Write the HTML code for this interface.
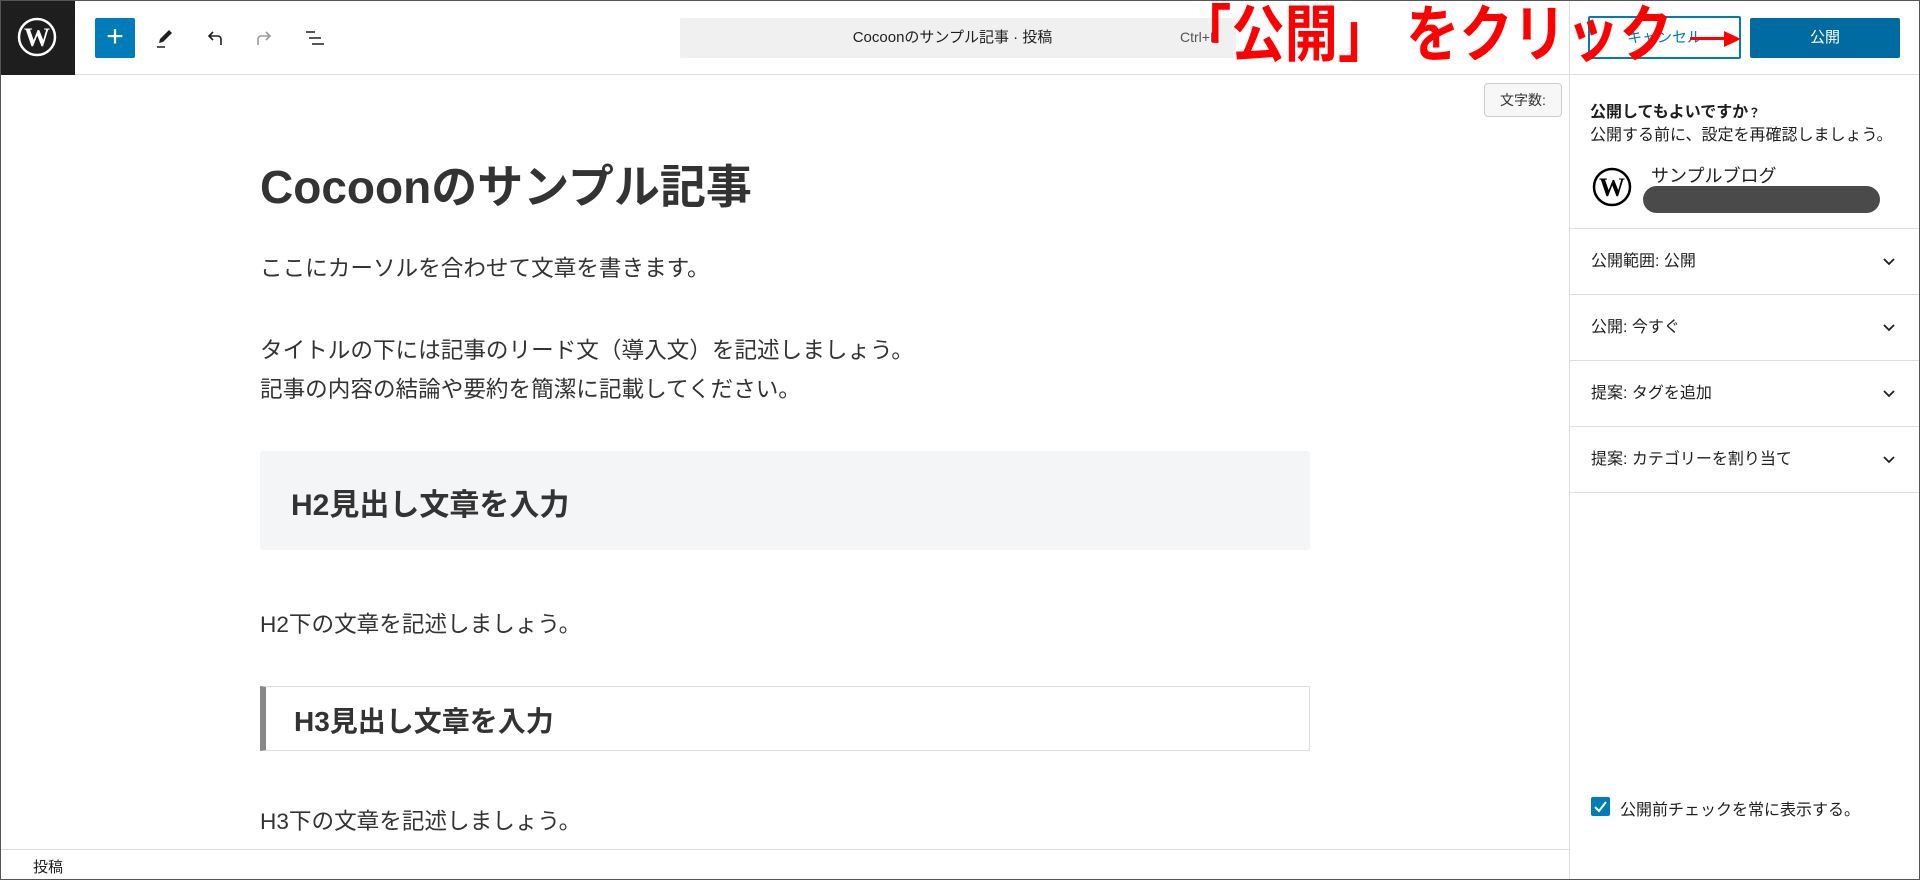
<!DOCTYPE html>
<html><head><meta charset="utf-8"><style>
*{margin:0;padding:0;box-sizing:border-box}
body{width:1920px;height:880px;position:relative;overflow:hidden;background:#fff;font-family:"Liberation Sans","Noto Sans CJK JP",sans-serif;color:#1e1e1e}
.a{position:absolute;white-space:nowrap}
.frame{position:absolute;left:0;top:0;width:1920px;height:880px;border:1px solid #555;pointer-events:none}
.row{position:absolute;left:1570px;width:350px;height:66px;border-bottom:1px solid #ddd;font-size:16px;padding-left:21px;line-height:66px}
.row svg{position:absolute;right:24px;top:26px}
.p{font-size:22.6px;color:#333;position:absolute;left:260px;white-space:nowrap}
</style></head><body>
<div class="a" style="left:0;top:0;width:1920px;height:75px;border-bottom:1px solid #ddd"></div>
<div class="a" style="left:0;top:0;width:75px;height:75px;background:#1e1e1e"></div>
<svg class="a" style="left:17px;top:17px" width="40" height="40" viewBox="0 0 40 40"><circle cx="20" cy="20" r="18" fill="none" stroke="#fff" stroke-width="2.5"/><text x="20" y="29" font-family="Liberation Serif,serif" font-size="26" font-weight="bold" fill="#fff" text-anchor="middle">W</text></svg>
<div class="a" style="left:95px;top:18px;width:40px;height:40px;background:#007cba;border-radius:2px;color:#fff;font-size:30px;line-height:38px;text-align:center">+</div>
<svg class="a" style="left:153px;top:26px" width="24" height="24" viewBox="0 0 24 24"><path d="M16 4l3 3-9 9-4 1 1-4z" fill="#1e1e1e"/><path d="M4 21h8" stroke="#1e1e1e" stroke-width="1.5"/></svg>
<svg class="a" style="left:203px;top:26px" width="24" height="24" viewBox="0 0 24 24"><path d="M18 19v-6a3 3 0 0 0-3-3H6M10 6l-4 4 4 4" fill="none" stroke="#1e1e1e" stroke-width="1.6"/></svg>
<svg class="a" style="left:252px;top:26px" width="24" height="24" viewBox="0 0 24 24"><path d="M6 19v-6a3 3 0 0 1 3-3h9M14 6l4 4-4 4" fill="none" stroke="#999" stroke-width="1.6"/></svg>
<svg class="a" style="left:303px;top:26px" width="24" height="24" viewBox="0 0 24 24"><path d="M3 6h9M6 12h12M9 18h12" stroke="#1e1e1e" stroke-width="1.6"/></svg>
<div class="a" style="left:680px;top:18px;width:556px;height:40px;background:#f0f0f0;border-radius:2px"></div>
<div class="a" style="left:680px;top:18px;width:545px;height:40px;line-height:40px;text-align:center;font-size:15px;color:#1e1e1e">Cocoonのサンプル記事 · 投稿</div>
<div class="a" style="left:1180px;top:29px;font-size:14px;color:#555">Ctrl+K</div>
<div class="a" style="left:1569px;top:0;width:1px;height:880px;background:#ddd"></div>
<div class="a" style="left:1588px;top:16px;width:153px;height:43px;border:2px solid #007cba;border-radius:2px;color:#007cba;font-size:15px;text-align:center;line-height:39px">キャンセル</div>
<div class="a" style="left:1750px;top:18px;width:150px;height:40px;background:#006ba1;border-radius:2px;color:#fff;font-size:15px;text-align:center;line-height:40px">公開</div>
<div class="a" style="left:1178px;top:0px;font-size:62px;font-weight:bold;color:#f00;line-height:72px;transform:scaleX(0.86);transform-origin:0 0">「公開」 をクリック</div>
<div class="a" style="left:1690px;top:37px;width:44px;height:3px;background:#f00"></div>
<svg class="a" style="left:1724px;top:30px" width="18" height="18" viewBox="0 0 18 18"><path d="M0 1l17 8-17 8z" fill="#f00"/></svg>
<div class="a" style="left:1484px;top:83px;width:78px;height:34px;border:1px solid #ccc;border-radius:4px;background:#f7f7f7;font-size:14px;text-align:center;line-height:32px;color:#333">文字数:</div>
<div class="a" style="left:260px;top:151px;font-size:46px;font-weight:bold;color:#333">Cocoonのサンプル記事</div>
<div class="p" style="top:250px">ここにカーソルを合わせて文章を書きます。</div>
<div class="p" style="top:332px">タイトルの下には記事のリード文（導入文）を記述しましょう。</div>
<div class="p" style="top:371px">記事の内容の結論や要約を簡潔に記載してください。</div>
<div class="a" style="left:260px;top:451px;width:1050px;height:99px;background:#f4f5f7;border-radius:3px"></div>
<div class="a" style="left:291px;top:480px;font-size:30px;font-weight:bold;color:#333">H2見出し文章を入力</div>
<div class="p" style="top:606px">H2下の文章を記述しましょう。</div>
<div class="a" style="left:260px;top:686px;width:1050px;height:65px;border:1px solid #ddd;border-left:6px solid #888"></div>
<div class="a" style="left:294px;top:700px;font-size:28px;font-weight:bold;color:#333">H3見出し文章を入力</div>
<div class="p" style="top:803px">H3下の文章を記述しましょう。</div>
<div class="a" style="left:0;top:849px;width:1569px;height:1px;background:#ddd"></div>
<div class="a" style="left:33px;top:856px;font-size:15px">投稿</div>
<div class="a" style="left:1590px;top:98px;font-size:16px;font-weight:bold">公開してもよいですか<span style="font-size:12px">？</span></div>
<div class="a" style="left:1590px;top:121px;font-size:16px">公開する前に、設定を再確認しましょう。</div>
<svg class="a" style="left:1592px;top:167px" width="40" height="40" viewBox="0 0 40 40"><circle cx="20" cy="20" r="18" fill="none" stroke="#000" stroke-width="2.5"/><text x="20" y="29" font-family="Liberation Serif,serif" font-size="26" font-weight="bold" fill="#000" text-anchor="middle">W</text></svg>
<div class="a" style="left:1651px;top:162px;font-size:18px">サンプルブログ</div>
<div class="a" style="left:1643px;top:186px;width:237px;height:27px;background:#4a4a4a;border-radius:14px"></div>
<div class="a" style="left:1570px;top:228px;width:350px;height:1px;background:#ddd"></div>
<div class="row" style="top:229px">公開範囲: 公開<svg width="14" height="14" viewBox="0 0 14 14"><path d="M2 4l5 5 5-5" fill="none" stroke="#1e1e1e" stroke-width="1.8"/></svg></div>
<div class="row" style="top:295px">公開: 今すぐ<svg width="14" height="14" viewBox="0 0 14 14"><path d="M2 4l5 5 5-5" fill="none" stroke="#1e1e1e" stroke-width="1.8"/></svg></div>
<div class="row" style="top:361px">提案: タグを追加<svg width="14" height="14" viewBox="0 0 14 14"><path d="M2 4l5 5 5-5" fill="none" stroke="#1e1e1e" stroke-width="1.8"/></svg></div>
<div class="row" style="top:427px">提案: カテゴリーを割り当て<svg width="14" height="14" viewBox="0 0 14 14"><path d="M2 4l5 5 5-5" fill="none" stroke="#1e1e1e" stroke-width="1.8"/></svg></div>
<div class="a" style="left:1591px;top:797px;width:19px;height:19px;background:#007cba;border-radius:2px"></div>
<svg class="a" style="left:1591px;top:797px" width="19" height="19" viewBox="0 0 19 19"><path d="M4 10l4 4 7-9" fill="none" stroke="#fff" stroke-width="2"/></svg>
<div class="a" style="left:1620px;top:796px;font-size:16px">公開前チェックを常に表示する。</div>
<div class="frame"></div>
</body></html>
